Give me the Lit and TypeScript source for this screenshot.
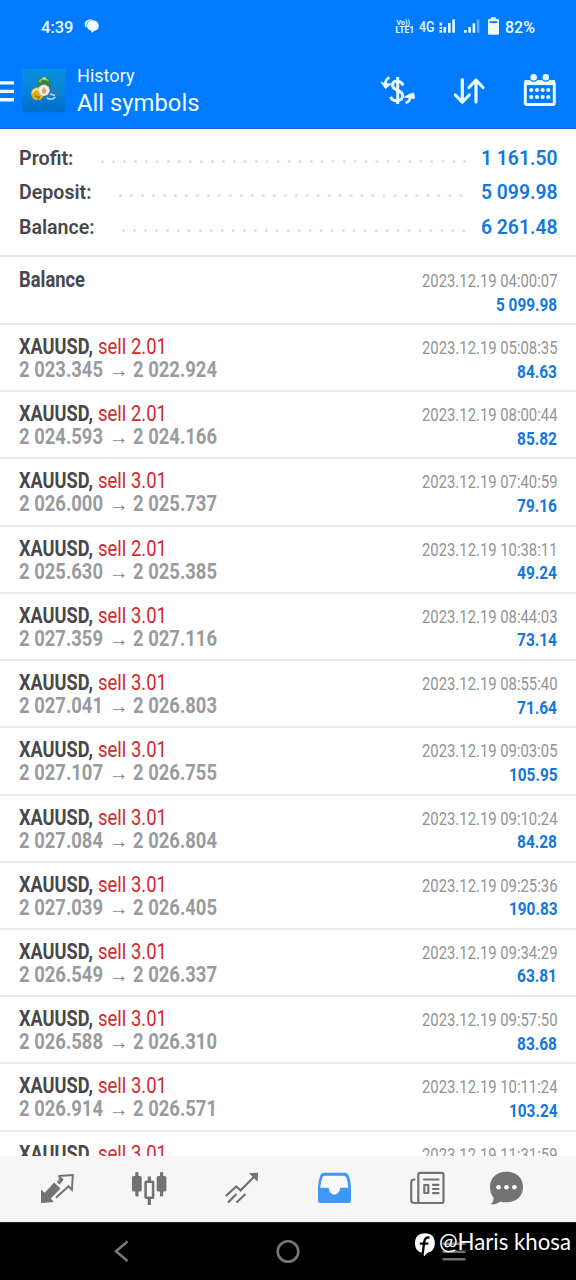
import { LitElement, html, css, svg } from "lit";
import { customElement, property } from "lit/decorators.js";

/** A line of text condensed or stretched to a set advance width. */
@customElement("fit-text")
class FitText extends LitElement {
  @property() text = "";
  @property({ type: Number }) w = 50;
  @property({ type: Number }) h = 24;
  @property({ type: Number }) base = 18;

  static styles = css`
    :host { display: block; flex: none; }
    svg { display: block; overflow: visible; }
    text { fill: currentColor; }
  `;

  render() {
    return html`<svg width=${this.w} height=${this.h}>
      <text x="0" y=${this.base} textLength=${this.w} lengthAdjust="spacingAndGlyphs">${this.text}</text>
    </svg>`;
  }
}

type Deal = [string, string, string, string, string];

const DEALS: Deal[] = [
  ["2.01", "2 023.345", "2 022.924", "05:08:35", "84.63"],
  ["2.01", "2 024.593", "2 024.166", "08:00:44", "85.82"],
  ["3.01", "2 026.000", "2 025.737", "07:40:59", "79.16"],
  ["2.01", "2 025.630", "2 025.385", "10:38:11", "49.24"],
  ["3.01", "2 027.359", "2 027.116", "08:44:03", "73.14"],
  ["3.01", "2 027.041", "2 026.803", "08:55:40", "71.64"],
  ["3.01", "2 027.107", "2 026.755", "09:03:05", "105.95"],
  ["3.01", "2 027.084", "2 026.804", "09:10:24", "84.28"],
  ["3.01", "2 027.039", "2 026.405", "09:25:36", "190.83"],
  ["3.01", "2 026.549", "2 026.337", "09:34:29", "63.81"],
  ["3.01", "2 026.588", "2 026.310", "09:57:50", "83.68"],
  ["3.01", "2 026.914", "2 026.571", "10:11:24", "103.24"],
];

const dots = (from: number, count: number) =>
  svg`${Array.from({ length: count }, (_, i) => svg`<circle cx=${from + i * 10.98} cy="14.500" r="1.5"/>`)}`;

@customElement("app-root")
class AppRoot extends LitElement {
  static styles = css`
    :host {
      display: flex; flex-direction: column; position: relative;
      width: 576px; height: 1280px; overflow: hidden;
      background: #fff; font-family: Roboto, "Liberation Sans", sans-serif;
    }
    svg { display: block; flex: none; }
    .top { height: 129px; flex: none; background: #007aff; color: #f2fcff; box-sizing: border-box; border-bottom: 1px solid #1269c7; }
    .status { display: flex; height: 54px; padding-left: 41px; }
    .clock { font-size: 16.5px; font-weight: 500; }
    .msg { margin-left: 10px; }
    .phone { margin-left: auto; }
    .pct { font-size: 16.5px; font-weight: 500; margin: 0 41.5px 0 3.5px; }
    .bar { display: flex; height: 74px; }
    .titles { margin-left: 11px; }
    .small { font-size: 18.3px; }
    .big { font-size: 23.2px; }
    .acts { margin-left: auto; }

    .summary { flex: none; height: 128px; box-sizing: border-box; padding: 18px 19px 0; border-bottom: 2px solid #e5e5e7; }
    .sum { display: flex; height: 34.3px; font-weight: 600; font-size: 19.5px; color: #48484b; }
    .sum svg { flex: 1; min-width: 0; fill: #dedee0; }
    .blue { color: #1477dc; }

    .list { flex: 1; min-height: 0; overflow: hidden; }
    .row { display: flex; justify-content: space-between; height: 67.22px; box-sizing: border-box; padding: 10px 19px 0; border-bottom: 2px solid #e9e9eb; }
    .row.first { height: 68px; padding-top: 10px; }
    .line { display: flex; }
    .name { font-size: 21.5px; font-weight: 700; color: #48484c; }
    .sell { font-size: 21.5px; color: #d3292f; margin-left: 5px; }
    .price { font-size: 21.2px; font-weight: 700; color: #999b9e; }
    .arrow { font: 20px "Liberation Sans", sans-serif; color: #85878a; margin: 0 5px 0 5.5px; }
    .right { display: flex; flex-direction: column; align-items: flex-end; }
    .date { font-size: 18.3px; color: #929497; }
    .val { font-size: 17.6px; font-weight: 700; }

    .tabs { flex: none; height: 66.5px; background: #f6f6f6; display: grid; padding-left: 11px; grid-template-columns: repeat(5, 92.5px) 65px; justify-items: center; align-items: center; color: #737373; }
    .tabs .on { color: #3f97f6; }
    .nav { flex: none; height: 58px; background: #000; box-sizing: border-box; border-top: 1px solid #222; }
    .mark { position: absolute; left: 415px; top: 1228px; display: flex; color: #fff; font: 22.5px Lato, sans-serif; }
    .mark fit-text { margin-left: 3px; }
  `;

  private sum(label: string, w: number, value: string, from: number, count: number) {
    return html`<div class="sum">
      <fit-text .text=${label} .w=${w} .h=${30} .base=${17.6}></fit-text>
      <svg height="30" viewBox="${19 + w} 0 ${461.5 - w} 30" preserveAspectRatio="none">${dots(from, count)}</svg>
      <fit-text class="blue" .text=${value} .w=${76.5} .h=${30} .base=${17.6}></fit-text>
    </div>`;
  }

  private deal([vol, open, close, time, profit]: Deal) {
    return html`<div class="row">
      <div>
        <div class="line">
          <fit-text class="name" text="XAUUSD," .w=${74} .h=${23} .base=${19}></fit-text>
          <fit-text class="sell" .text=${"sell " + vol} .w=${69} .h=${23} .base=${19}></fit-text>
        </div>
        <div class="line">
          <fit-text class="price" .text=${open} .w=${84} .h=${23} .base=${19.2}></fit-text>
          <fit-text class="arrow" text="→" .w=${19.5} .h=${23} .base=${19.3}></fit-text>
          <fit-text class="price" .text=${close} .w=${84} .h=${23} .base=${19.2}></fit-text>
        </div>
      </div>
      <div class="right">
        <fit-text class="date" .text=${"2023.12.19 " + time} .w=${135.5} .h=${23.5} .base=${19.1}></fit-text>
        <fit-text class="val blue" .text=${profit} .w=${profit.length === 6 ? 48.5 : 40} .h=${23} .base=${19.2}></fit-text>
      </div>
    </div>`;
  }

  render() {
    return html`
      <div class="top">
        <div class="status">
          <fit-text class="clock" text="4:39" .w=${32.5} .h=${54} .base=${32.5}></fit-text>
          <svg class="msg" width="17" height="54" viewBox="83.5 0 17 54" fill="#f2fcff">
            <path d="M84.2 24.5C84 20 90 18.5 94 20.4C86.5 19.5 85.5 24 86.3 28C85 27.2 84.2 26 84.2 24.5Z"/>
            <path d="M92.4 20.5c3.5 0 5.9 2 5.9 5.2 0 2.8-1.8 4.5-4.1 5.1l-3.4 2.2.2-2.2c-2.8-.4-4.5-2.4-4.5-5 0-3.2 2.4-5.3 5.9-5.3z"/>
          </svg>
          <svg class="phone" width="106" height="54" viewBox="395 0 106 54" fill="#eafaff">
            <g font-family="Roboto, sans-serif">
              <text x="396.5" y="25.3" font-size="7.5" font-weight="700" textLength="13.5" lengthAdjust="spacingAndGlyphs">Vo))</text>
              <text x="395.5" y="32.7" font-size="9" font-weight="700" textLength="18.5" lengthAdjust="spacingAndGlyphs">LTE1</text>
              <text x="419" y="32" font-size="15" font-weight="500" textLength="15.5" lengthAdjust="spacingAndGlyphs">4G</text>
            </g>
            <path d="M439.5 22.5h2.6v3h-2.6zM439.5 27h2.6v2h-2.6zM439.5 30h2.6v2.7h-2.6zM443.5 27h2.6v5.7h-2.6zM448 23h2.6v9.7h-2.6zM452.3 19.5h2.6v13.2h-2.6z"/>
            <path d="M464 30h2.6v2.7h-2.6zM468.3 27h2.6v5.7h-2.6zM472.6 23.3h2.6v9.4h-2.6z"/>
            <path opacity=".4" d="M476.8 19.5h2.6v13.2h-2.6z"/>
            <path fill-rule="evenodd" d="M490.8 17.2h5v1.9h2.2q1 0 1 1v13.6q0 1-1 1h-9q-1 0-1-1V20.1q0-1 1-1h1.8zM489.7 21.3h7.6v1.6h-7.6z"/>
          </svg>
          <fit-text class="pct" text="82%" .w=${30} .h=${54} .base=${32.5}></fit-text>
        </div>
        <div class="bar">
          <svg width="66" height="74" viewBox="0 54 66 74">
            <defs>
              <linearGradient id="bg" x1="0" y1="0" x2="0" y2="1"><stop offset="0" stop-color="#068fdc"/><stop offset=".5" stop-color="#0785d6"/><stop offset="1" stop-color="#006ccc"/></linearGradient>
            </defs>
            <path fill="#f2fcff" d="M0 81.2h14v3.4H0zM0 89.7h14v3.3H0zM0 98h14v3.4H0z"/>
            <rect x="22.3" y="68.8" width="43.4" height="43.5" rx="2.5" fill="url(#bg)"/>
            <circle cx="44" cy="83" r="6.3" fill="#37834b"/>
            <path d="M39.5 82.500a4.700 4.700 0 0 1 8.600-1.500" fill="none" stroke="#8cbb55" stroke-width="2"/>
            <circle cx="44.300" cy="78.500" r="1.800" fill="#a4d2a6"/>
            <circle cx="37.500" cy="93.800" r="6.500" fill="#d9ad24"/>
            <path d="M32.500 93c1-3 4-4.500 6-3.500" fill="none" stroke="#fae88b" stroke-width="2"/>
            <path d="M35 96l4 1-1 3" fill="none" stroke="#9a7812" stroke-width="1.500"/>
            <circle cx="51" cy="93.800" r="6.500" fill="#237bbd"/>
            <path d="M47 98q4 3 8.500-1M50 94l5 1.500" fill="none" stroke="#a0dcf4" stroke-width="1.600"/>
            <circle cx="44" cy="90.300" r="5.700" fill="#e8ddcf"/>
            <circle cx="44" cy="90.300" r="4.500" fill="#fbf2e9"/>
            <path d="M44 86.500l2.300 4-1 3h-2.600l-1-3z" fill="#dda077"/>
          </svg>
          <div class="titles">
            <fit-text class="small" text="History" .w=${57.5} .h=${27} .base=${28}></fit-text>
            <fit-text class="big" text="All symbols" .w=${122.5} .h=${40} .base=${30.3}></fit-text>
          </div>
          <svg class="acts" width="206" height="74" viewBox="370 54 206 74" fill="none" stroke="#eafaff">
            <g stroke-width="3">
              <path d="M397.700 77v27" stroke-width="3"/>
              <path d="M403 85.500C401.500 80.500 393 79.500 392.500 85C392.200 91.500 403 89 402.700 96C402.500 101.500 393 102.500 390.500 96.800"/>
              <path d="M389.500 77.500Q385.500 79 385.300 84.500" stroke-width="2.800"/>
              <path d="M381 82l3 1.500 7 .5-5.500 4.500z" fill="#eafaff" stroke-width="1"/>
              <path d="M405.500 103Q410 101.500 410.300 97" stroke-width="2.800"/>
              <path d="M404.500 97l10 1.500-.8-5.500-3.500 1z" fill="#eafaff" stroke-width="1"/>
            </g>
            <path stroke-width="3.200" stroke-linecap="round" stroke-linejoin="round" d="M462.300 79.500V102M455.300 95l7 7.200 7-7.200M476 102V80.500M469 87.500l7-7.500 7 7.500"/>
            <rect x="525.300" y="82.500" width="29" height="22" rx="1.800" stroke-width="3"/>
            <path stroke-width="5" d="M524.500 82.600h30.500"/>
            <g fill="#eafaff" stroke="#007aff" stroke-width="1.200"><circle cx="533.700" cy="77.300" r="3.900"/><circle cx="545.800" cy="77.300" r="3.900"/></g>
            <g fill="#eafaff" stroke="none">
              ${[531.3, 537, 542.6, 548.3].map((x) => svg`<circle cx=${x} cy="90" r="2.100"/><circle cx=${x} cy="97" r="2.100"/>`)}
            </g>
          </svg>
        </div>
      </div>

      <div class="summary">
        ${this.sum("Profit:", 54.5, "1 161.50", 102, 34)}
        ${this.sum("Deposit:", 72.5, "5 099.98", 120, 32)}
        ${this.sum("Balance:", 75.5, "6 261.48", 123, 32)}
      </div>

      <div class="list">
        <div class="row first">
          <fit-text class="name" text="Balance" .w=${66} .h=${23} .base=${19.5}></fit-text>
          <div class="right">
            <fit-text class="date" text="2023.12.19 04:00:07" .w=${135.5} .h=${23.5} .base=${19.8}></fit-text>
            <fit-text class="val blue" text="5 099.98" .w=${61} .h=${23} .base=${19.5}></fit-text>
          </div>
        </div>
        ${DEALS.map((d) => this.deal(d))}
        ${this.deal(["3.01", "2 026.571", "2 026.310", "11:31:59", "78.31"])}
      </div>

      <div class="tabs">
        <svg width="38" height="38" viewBox="38 1170 38 38" fill="none" stroke="currentColor">
          <path fill="currentColor" stroke="none" d="M41 1189.500l3.700 3.300 9.500-10.300 6.300 6-9.700 10 3 3.500-12.800 1z"/>
          <path stroke-width="2" d="M57.500 1181l2 2 1.800-2-2.300-2.300M58.500 1176l14.300-1-.9 14.700-3.400-3.500-12.500 11.500M58.500 1176l3.800 3.500-3 3.500"/>
        </svg>
        <svg width="38" height="38" viewBox="131 1170 38 38" fill="currentColor">
          <rect x="132" y="1176" width="9.700" height="15.500" rx="1.500"/><rect x="135.300" y="1172" width="3.200" height="24.500" rx="1"/>
          <rect x="156.700" y="1176" width="9.700" height="15.500" rx="1.500"/><rect x="160" y="1172" width="3.200" height="24.500" rx="1"/>
          <path d="M147.700 1176.500h3.200v5h-3.200zM147.700 1199h3.200v6h-3.200z"/>
          <rect x="145.600" y="1181.700" width="7.500" height="16" rx=".6" fill="none" stroke="currentColor" stroke-width="2.500"/>
        </svg>
        <svg width="38" height="38" viewBox="223 1170 38 38" fill="none" stroke="currentColor" stroke-width="2.300">
          <path d="M225.800 1196l10.500-9.500 4.300 3.800 14.500-14.500"/>
          <path d="M228 1202.500l8.500-8.500M236.500 1202.500l9-8.500"/>
          <path fill="currentColor" stroke="none" d="M249 1173.300l9-.6-.3 9z"/>
        </svg>
        <svg class="on" width="38" height="38" viewBox="316 1170 38 38" fill="currentColor">
          <path d="M323.500 1172.800h21.500q2.500 0 3.600 2.500 2.400 6 2.400 12.500v13q0 2.300-2.300 2.300h-28.500q-2.200 0-2.200-2.300v-13q0-6.500 2.400-12.500 1-2.500 3.100-2.500z"/>
          <path fill="#fafafa" d="M325 1175.700h18.500q2 0 2.800 1.800 1.800 4.500 2 10.300h-8.300c0 9-11.200 9-11.200 0h-8.500q.3-5.800 2.100-10.300.7-1.800 2.600-1.800z"/>
        </svg>
        <svg width="38" height="38" viewBox="408 1170 38 38" fill="none" stroke="currentColor" stroke-width="2.200" stroke-linejoin="round" stroke-linecap="round">
          <rect x="418.300" y="1172.800" width="25.200" height="30.200" rx="2"/>
          <path d="M414.500 1179.500q-3.300 0-3.300 3v17.500q0 3 3 3h6"/>
          <path d="M424 1179.500h14.500M433 1184.800h5.500M433 1189h5.500M433 1193.200h5.500"/>
          <rect x="424.300" y="1185" width="4" height="8"/>
        </svg>
        <svg width="38" height="38" viewBox="487 1170 38 38" fill="currentColor">
          <path d="M506.500 1171.700c9.800 0 16.500 6 16.500 15.300s-6.700 15.300-16.500 15.300c-2.300 0-4.200-.2-6-.9-3 2.300-6.700 3.200-10 2.800 2.200-1.600 3.200-3.700 3.200-6.200-2.200-2.800-3.700-6.300-3.700-11 0-9.300 6.700-15.300 16.500-15.300z"/>
          <g fill="#fff"><circle cx="498.600" cy="1187.300" r="2.300"/><circle cx="506.500" cy="1187.300" r="2.300"/><circle cx="514.400" cy="1187.300" r="2.300"/></g>
        </svg>
      </div>

      <div class="nav">
        <svg width="576" height="57" viewBox="0 1223 576 57" fill="none" stroke="#777" stroke-width="2.600">
          <path d="M127.500 1241.500l-11.500 9.800 11.500 9.800"/>
          <circle cx="288" cy="1251.500" r="10.300"/>
          <path stroke="#707070" stroke-linecap="round" d="M443.500 1243.800h21M443.500 1251.800h21M443.500 1259.300h21"/>
        </svg>
      </div>
      <div class="mark">
        <svg width="21" height="30" viewBox="415 1228 21 30">
          <path fill="#fff" d="M425 1233.200c6.500 0 9.800 3.600 9.800 9.800 0 5.600-2.700 8.900-7.300 9.700l-3.300 3.500-1.200-3.400c-5.200-.5-8-3.900-8-9.800 0-6.200 3.500-9.800 10-9.800z"/>
          <path fill="none" stroke="#000" stroke-width="2.300" d="M429.500 1237.700c-3.500-.8-4.800 1-5.200 4l-1.600 12M419.800 1243.700h8.500"/>
        </svg>
        <fit-text text="@Haris khosa" .w=${132} .h=${30} .base=${22.3}></fit-text>
      </div>
    `;
  }
}
